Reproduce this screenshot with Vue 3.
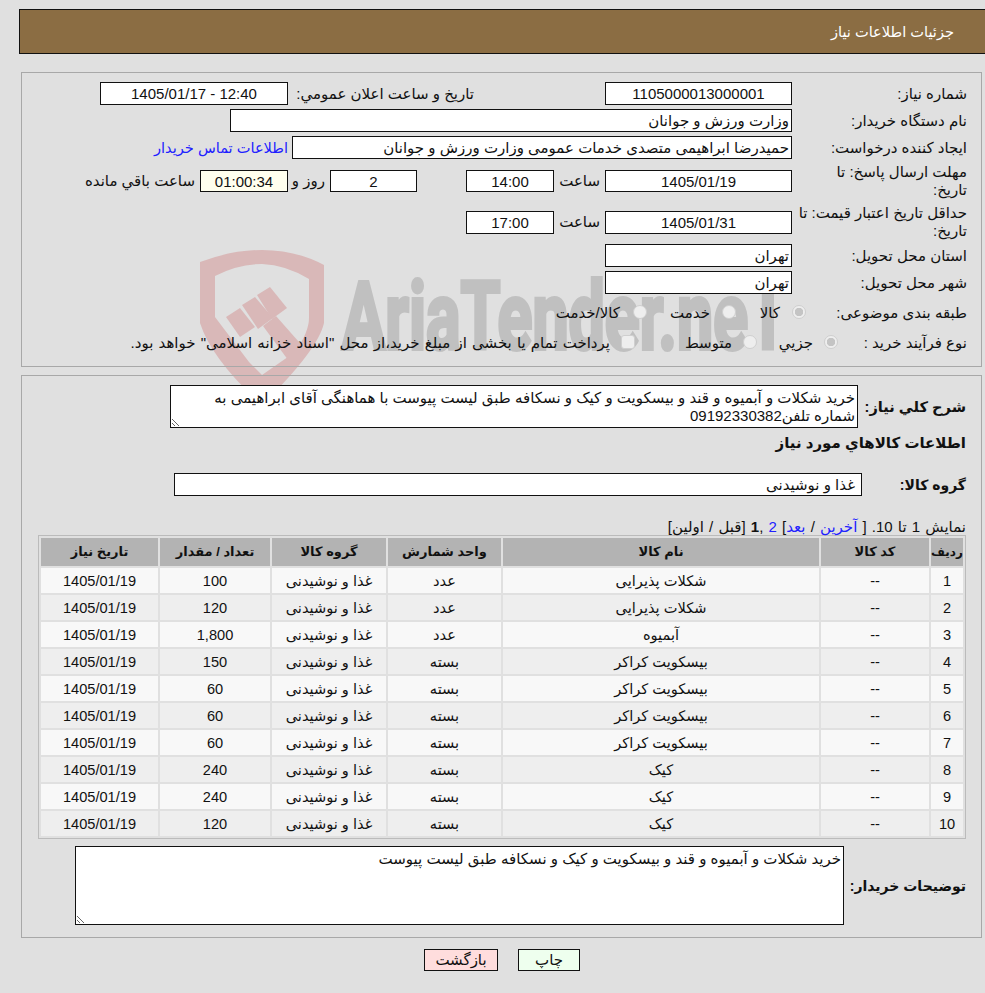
<script setup>
const rows = [
  [1, 'شکلات پذیرایی', 'عدد', '100'],
  [2, 'شکلات پذیرایی', 'عدد', '120'],
  [3, 'آبمیوه', 'عدد', '1,800'],
  [4, 'بیسکویت کراکر', 'بسته', '150'],
  [5, 'بیسکویت کراکر', 'بسته', '60'],
  [6, 'بیسکویت کراکر', 'بسته', '60'],
  [7, 'بیسکویت کراکر', 'بسته', '60'],
  [8, 'کیک', 'بسته', '240'],
  [9, 'کیک', 'بسته', '240'],
  [10, 'کیک', 'بسته', '120'],
]
</script>

<template>
  <div class="page" dir="rtl">
    <svg class="mark" viewBox="190 240 620 200" width="620" height="200" aria-hidden="true">
      <path class="pink" fill-rule="evenodd" d="M200 262 Q232 250 262 250 Q296 250 324 265 L324 323 Q318 350 262 405 Q212 360 200 323 Z M215 276 L215 317 L249 362 L262 375 L295 352 Q309 332 309 318 L309 279 Q286 265 262 264 Q238 264 215 276 Z" />
      <polygon class="pink" points="226,317 240,308 255,327 240,337" />
      <polygon class="pink" points="242,305 255,297 273,318 258,329" />
      <polygon class="pink" points="257,295 270,287 287,308 272,319" />
      <polygon class="pink" points="263,326 276,316 306,350 294,368" />
      <text class="mark-text" x="342" y="349" textLength="446" lengthAdjust="spacingAndGlyphs">AriaTender.neT</text>
    </svg>

    <header class="title"><span>جزئیات اطلاعات نیاز</span></header>

    <section class="panel first">
      <div class="row">
        <label class="lab">شماره نیاز:</label>
        <div class="field w187 center">1105000013000001</div>
        <label class="lab-pub">تاریخ و ساعت اعلان عمومي:</label>
        <div class="field w188 center" dir="ltr">1405/01/17 - 12:40</div>
      </div>
      <div class="row">
        <label class="lab">نام دستگاه خریدار:</label>
        <div class="field w562">وزارت ورزش و جوانان</div>
      </div>
      <div class="row">
        <label class="lab">ایجاد کننده درخواست:</label>
        <div class="field w500">حمیدرضا ابراهیمی متصدی خدمات عمومی وزارت ورزش و جوانان</div>
        <a class="link">اطلاعات تماس خریدار</a>
      </div>
      <div class="row tall">
        <label class="lab">مهلت ارسال پاسخ: تا<br />تاریخ:</label>
        <div class="field w187 center h22">1405/01/19</div>
        <span class="hour">ساعت</span>
        <div class="field w88 center h22">14:00</div>
        <div class="field w87 center h22 gap-day">2</div>
        <span class="day">روز و</span>
        <div class="field w88 center h22 pale">01:00:34</div>
        <span class="left">ساعت باقي مانده</span>
      </div>
      <div class="row tall last-tall">
        <label class="lab">حداقل تاریخ اعتبار قیمت: تا<br />تاریخ:</label>
        <div class="field w187 center">1405/01/31</div>
        <span class="hour">ساعت</span>
        <div class="field w88 center">17:00</div>
      </div>
      <div class="row">
        <label class="lab">استان محل تحویل:</label>
        <div class="field w187">تهران</div>
      </div>
      <div class="row">
        <label class="lab">شهر محل تحویل:</label>
        <div class="field w187">تهران</div>
      </div>
      <div class="row opt">
        <label class="lab-a">طبقه بندی موضوعی:</label>
        <span class="radio on"></span><span class="o1">کالا</span>
        <span class="radio r2"></span><span class="o2">خدمت</span>
        <span class="radio r3"></span><span class="o3">کالا/خدمت</span>
      </div>
      <div class="row opt">
        <label class="lab-b">نوع فرآیند خرید :</label>
        <span class="radio on"></span><span class="q1">جزیي</span>
        <span class="radio p2"></span><span class="q2">متوسط</span>
        <span class="check"></span>
        <span class="q3">پرداخت تمام یا بخشی از مبلغ خرید،از محل "اسناد خزانه اسلامی" خواهد بود.</span>
      </div>
    </section>

    <section class="panel second">
      <div class="desc-row">
        <label class="bold d-lab">شرح کلي نیاز:</label>
        <textarea class="area a1" readonly>خرید شکلات و آبمیوه و قند و بیسکویت و کیک و نسکافه طبق لیست پیوست با هماهنگی آقای ابراهیمی به شماره تلفن09192330382</textarea>
      </div>
      <h2 class="bold info">اطلاعات کالاهاي مورد نیاز</h2>
      <div class="group-row">
        <label class="bold g-lab">گروه کالا:</label>
        <div class="field w688">غذا و نوشیدنی</div>
      </div>
      <div class="pager">
        نمایش 1 تا 10. [ <a>آخرین</a> / <a>بعد</a>] <a>2</a> ,<b>1</b> [قبل / اولین]
      </div>
      <table class="grid">
        <colgroup>
          <col class="c1" /><col class="c2" /><col class="c3" /><col class="c4" /><col class="c5" /><col class="c6" /><col class="c7" />
        </colgroup>
        <thead>
          <tr>
            <th>ردیف</th><th>کد کالا</th><th>نام کالا</th><th>واحد شمارش</th><th>گروه کالا</th><th>تعداد / مقدار</th><th>تاریخ نیاز</th>
          </tr>
        </thead>
        <tbody>
          <tr v-for="r in rows" :key="r[0]">
            <td>{{ r[0] }}</td><td>--</td><td>{{ r[1] }}</td><td>{{ r[2] }}</td><td>غذا و نوشیدنی</td><td>{{ r[3] }}</td><td>1405/01/19</td>
          </tr>
        </tbody>
      </table>
      <div class="note-row">
        <label class="bold n-lab">توضیحات خریدار:</label>
        <textarea class="area a2" readonly>خرید شکلات و آبمیوه و قند و بیسکویت و کیک و نسکافه طبق لیست پیوست</textarea>
      </div>
    </section>

    <div class="buttons">
      <button class="btn print">چاپ</button>
      <button class="btn back">بازگشت</button>
    </div>
  </div>
</template>

<style>
html, body { margin: 0; background: #e0e0e0; }
</style>

<style scoped>
.page {
  position: relative;
  width: 985px;
  height: 993px;
  box-sizing: border-box;
  padding-top: 9px;
  overflow: hidden;
  background: #e0e0e0;
  color: #111;
  font: 15px/18px "Liberation Sans", "DejaVu Sans", sans-serif;
}
.mark { position: absolute; left: 190px; top: 240px; direction: ltr; }
.pink { fill: #d9b8b8; }
.mark-text {
  direction: ltr;
  text-anchor: start;
  font: 700 94px "Roboto", sans-serif;
  fill: #c0c0c0;
  stroke: #c0c0c0;
  stroke-width: 4px;
}

.title {
  position: relative;
  box-sizing: border-box;
  height: 45px;
  margin-left: 19px;
  padding: 13px 31px 0 0;
  background: #8b6d43;
  border: 1px solid #111;
  border-right: 0;
  color: #fff;
  font-size: 14.6px;
}
.panel {
  position: relative;
  box-sizing: border-box;
  width: 961px;
  margin-right: 3px;
  border: 1px solid #a8a8a8;
}
.first { height: 295px; margin-top: 18px; padding: 9px 14px 0 0; }
.second { height: 563px; margin-top: 8px; padding: 9px 15px 0 0; }

.row { display: flex; align-items: center; height: 23px; margin-bottom: 4px; }
.row.tall { height: 36px; margin: 1px 0 5px; }
.row.last-tall { margin-bottom: 4px; }
.row.opt { height: 30px; margin: 0; }
.lab { flex: none; width: 175px; white-space: nowrap; }
.lab-a { flex: none; width: 161px; }
.lab-b { flex: none; width: 129px; }

.field {
  flex: none;
  box-sizing: border-box;
  height: 23px;
  padding: 0 2px;
  line-height: 21px;
  background: #fff;
  border: 1px solid #111;
  white-space: nowrap;
  overflow: hidden;
}
.h22 { height: 22px; }
.center { text-align: center; }
.pale { background: #ffffee; }
.w187 { width: 187px; }
.w188 { width: 188px; }
.w562 { width: 562px; }
.w500 { width: 500px; }
.w88 { width: 88px; }
.w87 { width: 87px; }
.w688 { width: 688px; padding-right: 6px; }
.lab-pub { flex: none; width: 186px; margin-right: 131px; white-space: nowrap; }
.link { margin-right: 4px; color: #2020ff; font-size: 14.6px; white-space: nowrap; }
.hour { flex: none; width: 46px; margin-right: 5px; }
.gap-day { margin-right: 49px; }
.day { flex: none; width: 37px; margin-right: 5px; }
.left { margin-right: 5px; white-space: nowrap; }

.radio, .check {
  flex: none;
  box-sizing: border-box;
  width: 14px;
  height: 14px;
  margin-top: -3px;
  background: #eee;
  border: 1px solid #cfcfcf;
  border-radius: 50%;
}
.radio.on { background: radial-gradient(circle, #c4c4c4 0 4px, #eee 4.5px); }
.check { border-radius: 3px; margin-right: 52px; }
.o1 { margin-right: 12px; width: 20px; white-space: nowrap; }
.r2 { margin-right: 24px; }
.o2 { margin-right: 12px; width: 39px; white-space: nowrap; }
.r3 { margin-right: 24px; }
.o3 { margin-right: 13px; white-space: nowrap; }
.q1 { margin-right: 11px; width: 35px; white-space: nowrap; }
.p2 { margin-right: 21px; }
.q2 { margin-right: 11px; width: 45px; white-space: nowrap; }
.q3 { margin-right: 11px; white-space: nowrap; word-spacing: 1px; }

.bold { font-weight: 700; }
.desc-row { display: flex; align-items: center; height: 43px; }
.d-lab { flex: none; width: 108px; white-space: nowrap; font-size: 14.6px; }
.area {
  flex: none;
  box-sizing: border-box;
  display: block;
  margin: 0;
  padding: 3px 2px 0;
  background: #fff;
  border: 1px solid #111;
  border-radius: 0;
  color: #111;
  font: inherit;
  line-height: 18px;
  outline: 0;
}
.a1 { width: 688px; height: 43px; }
.info { margin: 6px 0 0; font-size: 15px; line-height: 18px; }
.group-row { display: flex; align-items: center; height: 23px; margin-top: 21px; }
.g-lab { flex: none; width: 104px; font-size: 14px; }
.pager { margin-top: 22px; height: 18px; line-height: 18px; white-space: nowrap; word-spacing: 1px; }
.pager a { color: #2020ff; }
.grid {
  table-layout: fixed;
  width: 927px;
  margin-top: -1px;
  border: 1px solid #bbb;
  border-spacing: 2px;
  border-collapse: separate;
  font-size: 14.6px;
}
.c1 { width: 32px; }
.c2 { width: 108px; }
.c3 { width: 316px; }
.c4 { width: 113px; }
.c5 { width: 114px; }
.c6 { width: 110px; }
.c7 { width: 117px; }
.grid th {
  height: 28px;
  padding: 0;
  background: #b3b3b3;
  font-size: 13px;
  text-align: center;
  white-space: nowrap;
}
.grid th:first-child { font-size: 12px; }
.grid td {
  height: 25px;
  padding: 0;
  text-align: center;
}
.grid tbody tr:nth-child(odd) td { background: #f8f8f8; }
.grid tbody tr:nth-child(even) td { background: #eeeeee; }
.note-row { display: flex; align-items: center; margin-top: 7px; }
.n-lab { flex: none; width: 122px; white-space: nowrap; font-size: 14px; }
.a2 { width: 769px; height: 79px; }

.buttons { display: flex; gap: 20px; margin: 11px 405px 0 0; }
.btn {
  box-sizing: border-box;
  height: 22px;
  margin: 0;
  padding: 0;
  border: 1px solid #111;
  border-radius: 0;
  color: #111;
  font: inherit;
  line-height: 20px;
}
.print { width: 62px; background: #eeffee; }
.back { width: 74px; background: #ffdddd; }
</style>
